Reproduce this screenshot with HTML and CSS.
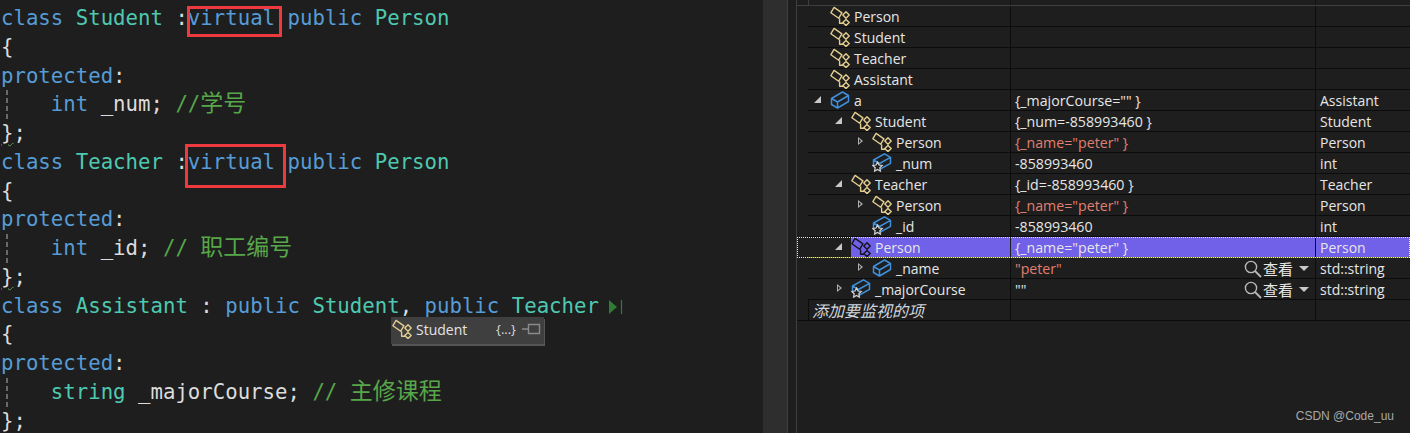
FILE: index.html
```html
<!DOCTYPE html>
<html lang="zh">
<head>
<meta charset="utf-8">
<title>Virtual inheritance</title>
<link rel="stylesheet" href="styles.css">
</head>
<body>
<svg class="defs" width="0" height="0" aria-hidden="true">
  <defs>
    <symbol id="cls" viewBox="0 0 20 20">
      <path d="M.9 6.700 4.100 1.400 11.900 6.800 8.700 12.200ZM9.600 12.500V17.200H13" fill="none" stroke="currentColor" stroke-width="1.400" stroke-linejoin="round"/>
      <path d="M16 5.800 19.200 9 16 12.200 12.800 9ZM16 13.400 19.200 16.500 16 19.600 12.800 16.500Z" fill="none" stroke="currentColor" stroke-width="1.400" stroke-linejoin="round"/>
    </symbol>
    <symbol id="box" viewBox="0 0 20 20">
      <path d="M1.500 8.500 12.500 2 18.500 5.500V11.500L7.500 18 1.500 14.500ZM1.500 8.500 7.500 12V18M7.500 12 18.500 5.500" fill="#1e1e1e" fill-opacity=".4" stroke="#3f8fdc" stroke-width="1.500" stroke-linejoin="round"/>
    </symbol>
    <symbol id="boxstar" viewBox="0 0 20 20">
      <path d="M1.500 7 12.500 .8 18.500 4.300V10.300L7.500 16.500 1.500 13ZM1.500 7 7.500 10.500V16.500M7.500 10.500 18.500 4.300" fill="#1e1e1e" fill-opacity=".4" stroke="#3f8fdc" stroke-width="1.500" stroke-linejoin="round"/>
      <path d="M5.500 9 7 12 10.200 12.500 7.800 14.700 8.400 18 5.500 16.400 2.600 18 3.200 14.700 .8 12.500 4 12Z" fill="#1e1e1e" stroke="#d4d4d4" stroke-width="1.200"/>
    </symbol>
  </defs>
</svg>

<main class="app">
  <section class="editor">
    <div class="line"><span class="k">class</span> <span class="t">Student</span> :<span class="k">virtual</span> <span class="k">public</span> <span class="t">Person</span></div>
    <div class="line">{</div>
    <div class="line"><span class="k">protected</span>:</div>
    <div class="line guided">    <span class="k">int</span> _num; <span class="c">//<span class="zh">学号</span></span></div>
    <div class="line"><span class="sq">}</span>;</div>
    <div class="line"><span class="k">class</span> <span class="t">Teacher</span> :<span class="k">virtual</span> <span class="k">public</span> <span class="t">Person</span></div>
    <div class="line">{</div>
    <div class="line"><span class="k">protected</span>:</div>
    <div class="line guided">    <span class="k">int</span> _id; <span class="c">// <span class="zh">职工编号</span></span></div>
    <div class="line"><span class="sq">}</span>;</div>
    <div class="line"><span class="k">class</span> <span class="t">Assistant</span> : <span class="k">public</span> <span class="t">Student</span>, <span class="k">public</span> <span class="t">Teacher</span><svg class="chev" width="16" height="16" viewBox="0 0 16 16"><path d="M2 1 10 8 2 15Z" fill="#2f7d32"/><path d="M14.500 1V15" stroke="#2f7d32" stroke-width="1.200"/></svg></div>
    <div class="line">{</div>
    <div class="line"><span class="k">protected</span>:</div>
    <div class="line guided">    <span class="t">string</span> _majorCourse; <span class="c">// <span class="zh">主修课程</span></span></div>
    <div class="line">};</div>

    <div class="mark mark-a"></div>
    <div class="mark mark-b"></div>

    <div class="tip">
      <svg class="ico tip-ico"><use href="#cls"/></svg>
      <span class="tip-name">Student</span>
      <span class="tip-val">{...}</span>
      <svg class="tip-pin" width="20" height="12" viewBox="0 0 20 12"><path d="M0 6H6M6.500 1.500H17.500V10.500H6.500Z" fill="none" stroke="#8a8a8a" stroke-width="1.400"/></svg>
    </div>
  </section>

  <div class="strip"></div>
  <div class="gap"></div>

  <section class="watch">
    <div class="head"><i class="h1"></i><i class="h2"></i><i class="h3"></i><i class="h4"></i></div>

    <div class="row"><div class="n l1 noline"><span class="ar"></span><span class="lab"><svg class="ico"><use href="#cls"/></svg>Person</span></div><div class="v"></div><div class="ty"></div></div>
    <div class="row"><div class="n l1"><span class="ar"></span><span class="lab"><svg class="ico"><use href="#cls"/></svg>Student</span></div><div class="v"></div><div class="ty"></div></div>
    <div class="row"><div class="n l1"><span class="ar"></span><span class="lab"><svg class="ico"><use href="#cls"/></svg>Teacher</span></div><div class="v"></div><div class="ty"></div></div>
    <div class="row"><div class="n l1"><span class="ar"></span><span class="lab"><svg class="ico"><use href="#cls"/></svg>Assistant</span></div><div class="v"></div><div class="ty"></div></div>
    <div class="row"><div class="n l1"><span class="ar open"></span><span class="lab"><svg class="ico"><use href="#box"/></svg>a</span></div><div class="v">{_majorCourse="" }</div><div class="ty">Assistant</div></div>
    <div class="row"><div class="n l2"><span class="ar open"></span><span class="lab"><svg class="ico"><use href="#cls"/></svg>Student</span></div><div class="v">{_num=-858993460 }</div><div class="ty">Student</div></div>
    <div class="row"><div class="n l3"><span class="ar shut"></span><span class="lab"><svg class="ico"><use href="#cls"/></svg>Person</span></div><div class="v red">{_name="peter" }</div><div class="ty">Person</div></div>
    <div class="row"><div class="n l3"><span class="ar"></span><span class="lab"><svg class="ico"><use href="#boxstar"/></svg>_num</span></div><div class="v">-858993460</div><div class="ty">int</div></div>
    <div class="row"><div class="n l2"><span class="ar open"></span><span class="lab"><svg class="ico"><use href="#cls"/></svg>Teacher</span></div><div class="v">{_id=-858993460 }</div><div class="ty">Teacher</div></div>
    <div class="row"><div class="n l3"><span class="ar shut"></span><span class="lab"><svg class="ico"><use href="#cls"/></svg>Person</span></div><div class="v red">{_name="peter" }</div><div class="ty">Person</div></div>
    <div class="row"><div class="n l3"><span class="ar"></span><span class="lab"><svg class="ico"><use href="#boxstar"/></svg>_id</span></div><div class="v">-858993460</div><div class="ty">int</div></div>
    <div class="row sel"><div class="n l2"><span class="ar open"></span><span class="lab"><svg class="ico dark"><use href="#cls"/></svg>Person</span></div><div class="v">{_name="peter" }</div><div class="ty">Person</div></div>
    <div class="row"><div class="n l3"><span class="ar shut"></span><span class="lab"><svg class="ico"><use href="#box"/></svg>_name</span></div><div class="v viz"><span class="red">"peter"</span><span class="view"><svg width="18" height="18" viewBox="0 0 18 18"><circle cx="7" cy="7" r="5.600" fill="none" stroke="#b8b8b8" stroke-width="1.400"/><path d="M11 11 17 17" stroke="#b8b8b8" stroke-width="1.800"/></svg><b>查看</b><span class="drop"></span></span></div><div class="ty">std::string</div></div>
    <div class="row"><div class="n l2"><span class="ar shut"></span><span class="lab"><svg class="ico"><use href="#boxstar"/></svg>_majorCourse</span></div><div class="v viz"><span>""</span><span class="view"><svg width="18" height="18" viewBox="0 0 18 18"><circle cx="7" cy="7" r="5.600" fill="none" stroke="#b8b8b8" stroke-width="1.400"/><path d="M11 11 17 17" stroke="#b8b8b8" stroke-width="1.800"/></svg><b>查看</b><span class="drop"></span></span></div><div class="ty">std::string</div></div>
    <div class="row add"><div class="n"><span class="hint">添加要监视的项</span></div><div class="v"></div><div class="ty"></div></div>
  </section>

  <div class="wm">CSDN @Code_uu</div>
</main>
</body>
</html>
```
FILE: styles.css
```css
* { box-sizing: border-box; }
html, body { margin: 0; height: 100%; background: #1e1e1e; overflow: hidden; }
.defs { position: absolute; }

.app { display: flex; width: 1410px; height: 433px; position: relative; }

/* code editor */
.editor {
  position: relative;
  width: 763px;
  flex: none;
  padding: 4.200px 0 0 1px;
  overflow: hidden;
  color: #dcdcdc;
  font: 20.7px/28.75px "DejaVu Sans Mono", "Noto Sans CJK SC", monospace;
}
.line { height: 28.75px; white-space: pre; }
.guided {
  background: repeating-linear-gradient(#6a6a6a 0 5px, transparent 5px 8px) 5px 0 / 2px 100% no-repeat;
}
.k { color: #569cd6; }
.t { color: #4ec9b0; }
.c { color: #57a64a; }
.zh { font: 23px/0 "Noto Sans CJK SC", sans-serif; }
.sq { text-decoration: underline wavy #57a64a 1px; text-underline-offset: 2px; }
.chev { vertical-align: -2px; margin-left: 8px; }

.mark { position: absolute; border: 3px solid #ee3a3f; }
.mark-a { left: 187px; top: 6px; width: 95px; height: 31px; }
.mark-b { left: 185px; top: 144px; width: 101px; height: 44px; }

.tip {
  position: absolute;
  left: 391px;
  top: 317px;
  width: 153px;
  height: 27px;
  display: flex;
  align-items: center;
  padding-bottom: 3px;
  background: #3f3f40;
  box-shadow: 1px 2px 0 #555;
  color: #e4e4e4;
  font: 14px "Open Sans", sans-serif;
}
.tip-ico { margin-left: 1px; }
.tip-name { width: 80px; }
.tip-val { color: #dcdcdc; font-size: 13px; }
.tip-pin { margin-left: 6px; }

.strip { width: 24px; flex: none; background: #2e2e2e; }
.gap { width: 10px; flex: none; border-left: 1px solid #3f3f3f; border-right: 1px solid #3f3f3f; }

/* watch window */
.watch {
  width: 613px;
  flex: none;
  color: #e6e6e6;
  font: 14px/22px "Open Sans", sans-serif;
}
.head { display: flex; height: 6px; border-bottom: 1px solid #3f3f3f; }
.head .h1 { width: 11px; }
.head .h2 { width: 203px; border-left: 1px solid #3f3f3f; border-right: 1px solid #141414; }
.head .h3 { width: 305px; border-right: 1px solid #141414; }
.head .h4 { flex: 1; }

.row { display: flex; height: 21px; padding-left: 11px; }
.n, .v, .ty { height: 21px; border-bottom: 1px solid #0c0c0c; white-space: nowrap; }
.n { width: 203px; display: flex; border-right: 1px solid #0c0c0c; flex: none; }
.v { width: 305px; flex: none; border-right: 1px solid #0c0c0c; padding-left: 4px; font-size: 14.2px; }
.ty { flex: 1; padding-left: 4px; }

.l1 { padding-left: 6px; }
.l2 { padding-left: 27px; }
.l3 { padding-left: 48px; }

.ar { width: 16px; flex: none; position: relative; }
.ar.open::before {
  content: "";
  position: absolute;
  left: 0;
  top: 6px;
  border-style: solid;
  border-width: 0 0 7px 7px;
  border-color: transparent transparent #c8c8c8 transparent;
}
.ar.shut::before {
  content: "";
  position: absolute;
  left: 2px;
  top: 5px;
  border-style: solid;
  border-width: 4px 0 4px 5px;
  border-color: transparent transparent transparent #b0b0b0;
}
.ar.shut::after {
  content: "";
  position: absolute;
  left: 3px;
  top: 7px;
  border-style: solid;
  border-width: 2px 0 2px 2.500px;
  border-color: transparent transparent transparent #1e1e1e;
}

.lab { flex: 1; display: flex; align-items: flex-start; }
.ico { width: 20px; height: 20px; margin-right: 4px; flex: none; color: #e3cd8f; display: block; }
.red { color: #e08070; }
.viz { display: flex; justify-content: space-between; }
.view { display: flex; align-items: center; height: 21px; width: 71px; color: #e6e6e6; }
.view b { font: 400 15px "Noto Sans CJK SC", sans-serif; margin-left: 1px; }
.drop {
  margin-left: 6px;
  border-style: solid;
  border-width: 5px 5.500px 0;
  border-color: #c8c8c8 transparent transparent;
}

.sel .n, .sel .v, .sel .ty { border-bottom: 1px solid #6e6e20; }
.sel { outline: 1px dotted #e8e8e8; outline-offset: -1px; }
.sel .lab, .sel .v, .sel .ty { background: #7160e8; }
.sel .n { border-right-color: #1e1e1e; }
.sel .dark { color: #15131f; }

.add { position: relative; }
.add::after { content: ""; position: absolute; left: 0; width: 11px; bottom: 0; border-bottom: 1px solid #0c0c0c; }
.add .n { border-left: 1px solid #0c0c0c; }
.hint { font: italic 16px/21px "Noto Sans CJK SC", sans-serif; color: #cfd6de; padding-left: 3px; }

.wm {
  position: absolute;
  right: 16px;
  top: 409px;
  color: #a8a8a8;
  font: 12px "Liberation Sans", sans-serif;
}
```
